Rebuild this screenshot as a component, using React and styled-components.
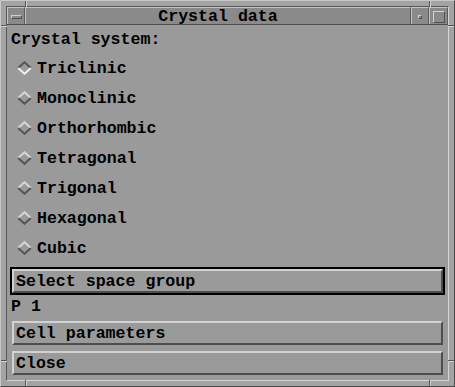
import React from 'react';
import styled, { createGlobalStyle } from 'styled-components';

const GlobalStyle = createGlobalStyle`
  html, body {
    margin: 0;
    padding: 0;
    background: #a3a3a3;
  }
  * {
    box-sizing: border-box;
  }
`;

const Window = styled.div`
  position: relative;
  width: 455px;
  height: 387px;
  background: #a3a3a3;
  border: 1px solid;
  border-color: #c8c8c8 #4a4a4a #4a4a4a #c8c8c8;
  padding: 5px;
  font-family: "Liberation Mono", "DejaVu Sans Mono", monospace;
  font-weight: bold;
  font-size: 16.6px;
  color: #000;
`;

const Notch = styled.div`
  position: absolute;
  background: #585858;
  box-shadow: ${p => (p.$vertical ? '1px 0 0 #d2d2d2' : '0 1px 0 #d2d2d2')};
  ${p => (p.$vertical ? 'width: 1px; height: 6px;' : 'width: 6px; height: 1px;')}
`;

const Inner = styled.div`
  display: flex;
  flex-direction: column;
  height: 100%;
  border: 1px solid;
  border-color: #585858 #d4d4d4 #d4d4d4 #585858;
`;

const TitleBar = styled.div`
  display: flex;
  height: 18px;
  background: #8a8a8a;
  border-bottom: 1px solid #4e4e4e;
`;

const TitleCell = styled.div`
  display: flex;
  align-items: center;
  justify-content: center;
  width: ${p => p.$width || 'auto'};
  flex: ${p => (p.$width ? 'none' : '1')};
  border: 1px solid;
  border-color: #c4c4c4 #5a5a5a #5a5a5a #c4c4c4;
  border-bottom: none;
  line-height: 16px;
  padding-top: 1px;
  overflow: hidden;
`;

const MenuBar = styled.div`
  width: 11px;
  height: 4px;
  background: #8a8a8a;
  border: 1px solid;
  border-color: #d0d0d0 #505050 #505050 #d0d0d0;
`;

const MinBox = styled.div`
  width: 4px;
  height: 4px;
  border: 1px solid;
  border-color: #d0d0d0 #505050 #505050 #d0d0d0;
`;

const MaxBox = styled.div`
  width: 12px;
  height: 12px;
  border: 1px solid;
  border-color: #d0d0d0 #505050 #505050 #d0d0d0;
`;

const Content = styled.div`
  flex: 1;
  display: flex;
  flex-direction: column;
  background: #9a9a9a;
  padding: 5px 3px 2px 3px;
`;

const Label = styled.div`
  height: ${p => p.$height || 20}px;
  line-height: ${p => p.$height || 20}px;
  padding-left: 1px;
  white-space: pre;
`;

const RadioList = styled.div`
  display: flex;
  flex-direction: column;
  margin-top: 3px;
  margin-bottom: 4px;
`;

const RadioRow = styled.div`
  display: flex;
  align-items: center;
  height: 30px;
  padding-left: 7px;
  gap: 5px;
`;

const Diamond = ({ selected }) => {
  const top = selected ? '#555555' : '#d6d6d6';
  const bottom = selected ? '#eeeeee' : '#555555';
  return (
    <svg width="15" height="14" viewBox="0 0 15 14">
      <polygon points="1,7 7.5,1 14,7 7.5,13" fill="#9a9a9a" />
      <path d="M1.2 7 L7.5 1.2 L13.8 7" fill="none" stroke={top} strokeWidth="2" />
      <path d="M1.2 7 L7.5 12.8 L13.8 7" fill="none" stroke={bottom} strokeWidth="2" />
    </svg>
  );
};

const ButtonFrame = styled.div`
  height: 28px;
  border: 2px solid ${p => (p.$focused ? '#000' : 'transparent')};
  margin-bottom: ${p => p.$gap || 0}px;
`;

const Button = styled.button`
  display: block;
  width: 100%;
  height: 100%;
  margin: 0;
  padding: 0 0 0 2px;
  text-align: left;
  font: inherit;
  color: inherit;
  background: #9a9a9a;
  border: 2px solid;
  border-color: #d2d2d2 #4e4e4e #4e4e4e #d2d2d2;
  white-space: pre;
`;

const systems = [
  'Triclinic',
  'Monoclinic',
  'Orthorhombic',
  'Tetragonal',
  'Trigonal',
  'Hexagonal',
  'Cubic',
];

const App = () => (
  <>
    <GlobalStyle />
    <Window>
      <Notch $vertical style={{ left: 24, top: 0 }} />
      <Notch $vertical style={{ left: 428, top: 0 }} />
      <Notch style={{ left: 0, top: 24 }} />
      <Notch style={{ right: 0, top: 24 }} />
      <Notch style={{ left: 0, top: 359 }} />
      <Notch style={{ right: 0, top: 359 }} />
      <Notch $vertical style={{ left: 24, bottom: 0 }} />
      <Notch $vertical style={{ left: 428, bottom: 0 }} />
      <Inner>
        <TitleBar>
          <TitleCell $width="18px">
            <MenuBar />
          </TitleCell>
          <TitleCell>Crystal data</TitleCell>
          <TitleCell $width="18px">
            <MinBox />
          </TitleCell>
          <TitleCell $width="19px">
            <MaxBox />
          </TitleCell>
        </TitleBar>
        <Content>
          <Label>Crystal system:</Label>
          <RadioList>
            {systems.map((name, i) => (
              <RadioRow key={name}>
                <Diamond selected={i === 0} />
                <span>{name}</span>
              </RadioRow>
            ))}
          </RadioList>
          <ButtonFrame $focused>
            <Button>Select space group</Button>
          </ButtonFrame>
          <Label $height={24}>P 1</Label>
          <ButtonFrame $gap={2}>
            <Button>Cell parameters</Button>
          </ButtonFrame>
          <ButtonFrame>
            <Button>Close</Button>
          </ButtonFrame>
        </Content>
      </Inner>
    </Window>
  </>
);

export default App;
